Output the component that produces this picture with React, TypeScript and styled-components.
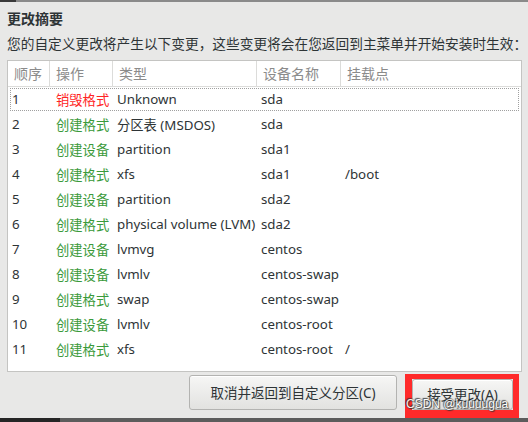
import React from 'react'
import styled, { createGlobalStyle } from 'styled-components'

const GlobalStyle = createGlobalStyle`
  html, body {
    margin: 0;
    padding: 0;
    background: #e8e8e7;
  }
  body {
    font-family: "Noto Sans", "Noto Sans CJK SC", sans-serif;
    color: #2e3436;
  }
`

type Row = { id: number; action: string; destroy?: boolean; kind: string; device: string; mount: string }

const rows: Row[] = [
  { id: 1, action: '销毁格式', destroy: true, kind: 'Unknown', device: 'sda', mount: '' },
  { id: 2, action: '创建格式', kind: '分区表 (MSDOS)', device: 'sda', mount: '' },
  { id: 3, action: '创建设备', kind: 'partition', device: 'sda1', mount: '' },
  { id: 4, action: '创建格式', kind: 'xfs', device: 'sda1', mount: '/boot' },
  { id: 5, action: '创建设备', kind: 'partition', device: 'sda2', mount: '' },
  { id: 6, action: '创建格式', kind: 'physical volume (LVM)', device: 'sda2', mount: '' },
  { id: 7, action: '创建设备', kind: 'lvmvg', device: 'centos', mount: '' },
  { id: 8, action: '创建设备', kind: 'lvmlv', device: 'centos-swap', mount: '' },
  { id: 9, action: '创建格式', kind: 'swap', device: 'centos-swap', mount: '' },
  { id: 10, action: '创建设备', kind: 'lvmlv', device: 'centos-root', mount: '' },
  { id: 11, action: '创建格式', kind: 'xfs', device: 'centos-root', mount: '/' },
]

const App = () => {
  return (
    <Screen>
      <GlobalStyle />
      <TopBar />
      <Dialog>
        <Title>更改摘要</Title>
        <Subtitle>您的自定义更改将产生以下变更，这些变更将会在您返回到主菜单并开始安装时生效：</Subtitle>
        <Table>
          <HeaderRow>
            <HeadCell>顺序</HeadCell>
            <HeadCell>操作</HeadCell>
            <HeadCell>类型</HeadCell>
            <HeadCell>设备名称</HeadCell>
            <HeadCell last>挂载点</HeadCell>
          </HeaderRow>
          {rows.map((r) => (
            <BodyRow key={r.id} focused={r.id === 1}>
              <Cell>{r.id}</Cell>
              <ActionCell destroy={r.destroy}>{r.action}</ActionCell>
              <Cell>{r.kind}</Cell>
              <Cell>{r.device}</Cell>
              <Cell>{r.mount}</Cell>
            </BodyRow>
          ))}
        </Table>
        <ButtonBar>
          <Button w={208} h={35}>取消并返回到自定义分区(C)</Button>
          <Highlight>
            <Button w={101} h={31}>接受更改(A)</Button>
            <Watermark>CSDN @kuuuugua</Watermark>
          </Highlight>
        </ButtonBar>
      </Dialog>
      <BottomBar>
        <BottomDark />
      </BottomBar>
    </Screen>
  )
}

export default App

const Screen = styled.div`
  width: 528px;
  height: 422px;
  overflow: hidden;
  display: flex;
  flex-direction: column;
  background: #e8e8e7;
`

const TopBar = styled.div`
  height: 2px;
  background: linear-gradient(to right, #3a3a3a 0 16px, #8a8a8a 16px);
`

const Dialog = styled.div`
  flex: 1;
  display: flex;
  flex-direction: column;
  padding: 0 6px 0 7px;
`

const Title = styled.div`
  margin-top: 7px;
  font-size: 14px;
  font-weight: bold;
  line-height: 20px;
  color: #2e3436;
`

const Subtitle = styled.div`
  margin-top: 5px;
  font-size: 13.7px;
  line-height: 20px;
  white-space: nowrap;
  color: #2e3436;
`

const Table = styled.div`
  margin-top: 6px;
  height: 312px;
  box-sizing: border-box;
  border: 1px solid #c4c4c2;
  background: #fff;
  width: 515px;
`

const cols = '42px 63px 144px 84px 1fr'

const HeaderRow = styled.div`
  display: grid;
  grid-template-columns: ${cols};
  height: 25px;
  border-bottom: 1px solid #dcdcda;
`

const HeadCell = styled.div<{ last?: boolean }>`
  display: flex;
  align-items: center;
  padding-left: 6px;
  font-size: 14px;
  color: #8b8b8b;
  border-right: ${(p) => (p.last ? 'none' : '1px solid #dcdcda')};
`

const BodyRow = styled.div<{ focused?: boolean }>`
  position: relative;
  display: grid;
  grid-template-columns: ${cols};
  height: 25px;
  &::after {
    content: '';
    display: ${(p) => (p.focused ? 'block' : 'none')};
    position: absolute;
    left: 2px;
    right: 2px;
    top: 1px;
    bottom: 1px;
    border: 1px dotted #a0a0a0;
  }
`

const Cell = styled.div`
  display: flex;
  align-items: center;
  padding-left: 4px;
  font-size: 13.3px;
  color: #2e3436;
  white-space: nowrap;
`

const ActionCell = styled(Cell)<{ destroy?: boolean }>`
  padding-left: 6px;
  color: ${(p) => (p.destroy ? '#ff2424' : '#3a9a3a')};
`

const ButtonBar = styled.div`
  display: flex;
  justify-content: flex-end;
  align-items: flex-start;
  gap: 8px;
  padding-right: 3px;
`

const Button = styled.button<{ w: number; h: number }>`
  width: ${(p) => p.w}px;
  height: ${(p) => p.h}px;
  padding: 0;
  box-sizing: border-box;
  border: 1px solid #b3b3b1;
  border-radius: 3px;
  background: linear-gradient(to bottom, #f6f6f5, #e2e2e0);
  font-family: "Noto Sans", "Noto Sans CJK SC", sans-serif;
  font-size: 13.5px;
  color: #2e3436;
  box-shadow: inset 0 1px 0 #fff;
  margin-top: 3px;
`

const Highlight = styled.div`
  position: relative;
  margin-top: 2px;
  display: flex;
  border-style: solid;
  border-color: #ff2a2a;
  border-width: 5px 6px 8px 7px;
  background: #e8e8e7;
  & > button {
    margin-top: 0;
  }
`

const Watermark = styled.span`
  position: absolute;
  left: -6px;
  top: 18px;
  font-family: "Liberation Sans", sans-serif;
  font-size: 12px;
  color: #fff;
  white-space: nowrap;
  text-shadow: 0 0 1px #333, 1px 1px 1px #333, -1px -1px 1px #333;
  opacity: 0.9;
`

const BottomBar = styled.div`
  height: 5px;
  background: #5c5c5c;
  display: flex;
`

const BottomDark = styled.div`
  width: 60px;
  background: #252525;
`
